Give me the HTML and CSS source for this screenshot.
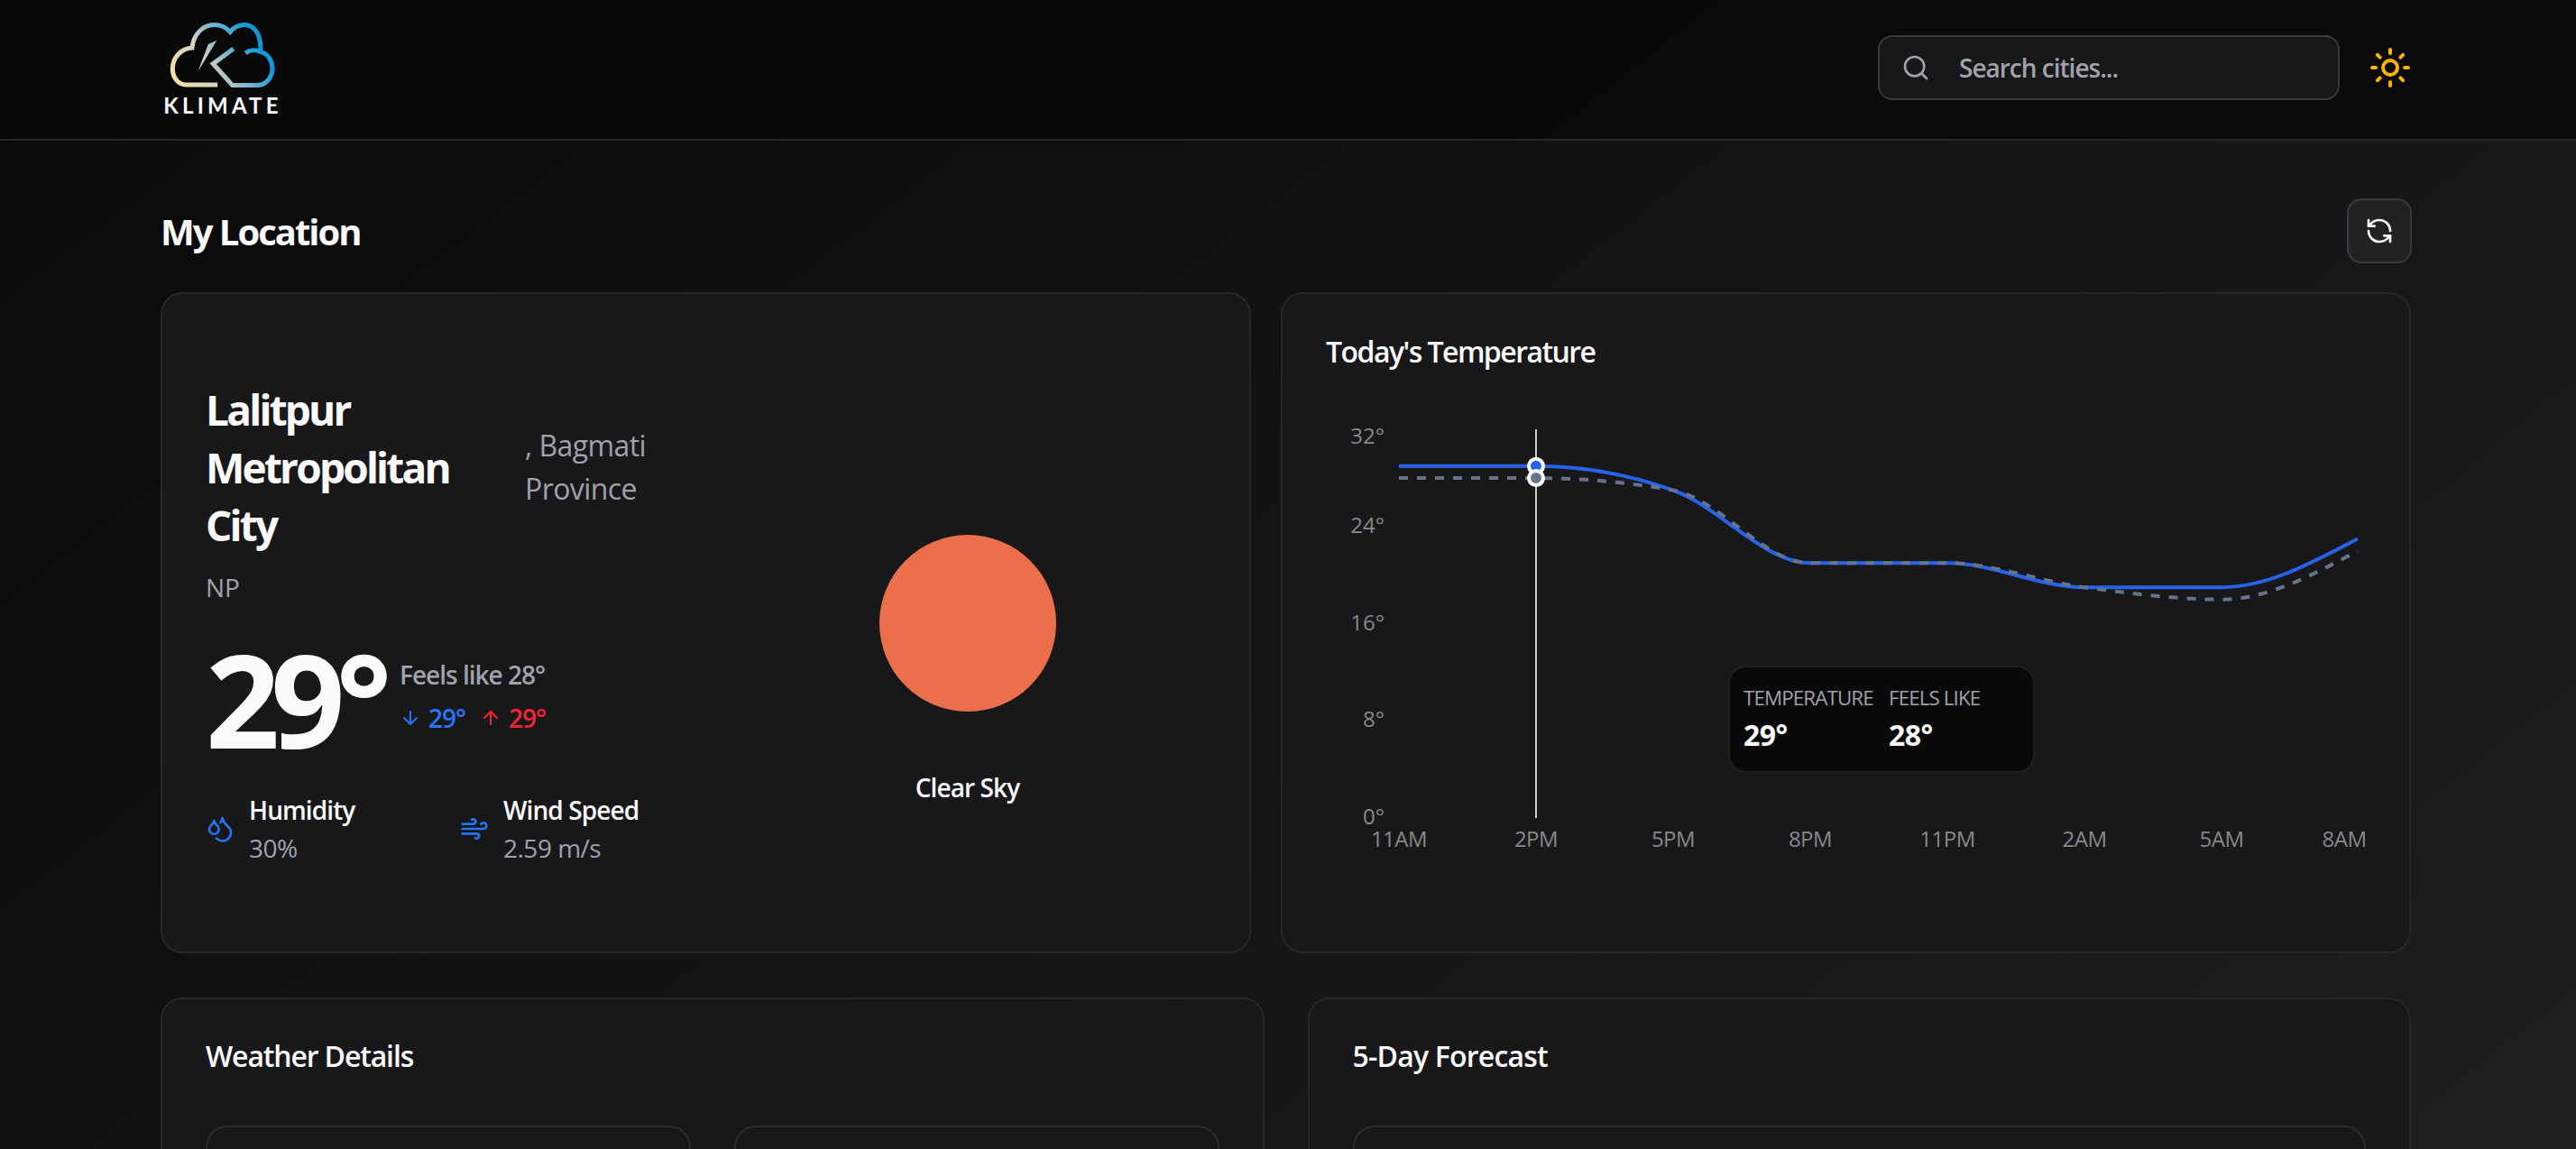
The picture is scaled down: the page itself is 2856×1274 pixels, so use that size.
FILE: index.html
```html
<!DOCTYPE html>
<html lang="en">
<head>
    <meta charset="UTF-8">
    <meta name="viewport" content="width=device-width, initial-scale=1.0">
    <title>Klimate</title>
    <link rel="stylesheet" href="styles.css">
</head>
<body>
    <header class="site-header">
        <div class="logo">
            <svg class="logo-mark" viewBox="55 35 355 225" fill="none">
                <defs>
                    <linearGradient id="cloudGrad" gradientUnits="userSpaceOnUse" x1="70" y1="250" x2="380" y2="60">
                        <stop offset="0" stop-color="#f6e3a1"/>
                        <stop offset="0.35" stop-color="#d5d3bd"/>
                        <stop offset="0.6" stop-color="#6fb2d3"/>
                        <stop offset="0.85" stop-color="#0f98d8"/>
                    </linearGradient>
                </defs>
                <path d="M215 248H110C82 248 65 222 65 195C65 155 95 127 130 125C135 80 165 48 205 48C225 48 245 58 257 72C270 55 285 48 305 48C340 48 362 85 358 138C385 145 398 170 398 195C398 225 375 250 345 250H265L200 178L268 128" stroke="url(#cloudGrad)" stroke-width="15"/>
                <path d="M308 142C325 130 345 131 358 138" stroke="url(#cloudGrad)" stroke-width="15"/>
                <path d="M213 100L150 203L184 113Z" fill="url(#cloudGrad)"/>
            </svg>
            <span class="logo-text">KLIMATE</span>
        </div>
        <div class="header-right">
            <div class="search-box">
                <svg class="icon icon-32" viewBox="0 0 24 24"><circle cx="11" cy="11" r="8"/><path d="m21 21-4.3-4.3"/></svg>
                <span>Search cities...</span>
            </div>
            <svg class="sun-toggle" viewBox="0 0 24 24"><circle cx="12" cy="12" r="4"/><path d="M12 2v2"/><path d="M12 20v2"/><path d="m4.93 4.93 1.41 1.41"/><path d="m17.66 17.66 1.41 1.41"/><path d="M2 12h2"/><path d="M20 12h2"/><path d="m6.34 17.66-1.41 1.41"/><path d="m19.07 4.93-1.41 1.41"/></svg>
        </div>
    </header>

    <main class="container">
        <div class="title-row">
            <h1>My Location</h1>
            <button class="refresh-btn">
                <svg class="icon icon-32" viewBox="0 0 24 24"><path d="M21 12a9 9 0 0 0-9-9 9.75 9.75 0 0 0-6.74 2.74L3 8"/><path d="M3 3v5h5"/><path d="M3 12a9 9 0 0 0 9 9 9.75 9.75 0 0 0 6.74-2.74L21 16"/><path d="M16 16h5v5"/></svg>
            </button>
        </div>

        <div class="top-grid">
            <section class="card current">
                <div class="current-left">
                    <div class="place">
                        <h2>Lalitpur Metropolitan City</h2>
                        <span class="region">, Bagmati Province</span>
                    </div>
                    <p class="country">NP</p>
                    <div class="temp-row">
                        <div class="temp-big">29°</div>
                        <div class="temp-side">
                            <p class="feels">Feels like 28°</p>
                            <div class="minmax">
                                <span class="low">
                                    <svg class="icon icon-24" viewBox="0 0 24 24"><path d="M12 5v14"/><path d="m19 12-7 7-7-7"/></svg>
                                    29°
                                </span>
                                <span class="high">
                                    <svg class="icon icon-24" viewBox="0 0 24 24"><path d="m5 12 7-7 7 7"/><path d="M12 19V5"/></svg>
                                    29°
                                </span>
                            </div>
                        </div>
                    </div>
                    <div class="stats">
                        <div class="stat">
                            <svg class="icon icon-32 blue" viewBox="0 0 24 24"><path d="M7 16.3c2.2 0 4-1.83 4-4.05 0-1.16-.57-2.26-1.71-3.19S7.29 6.75 7 5.3c-.29 1.45-1.14 2.84-2.29 3.76S3 11.1 3 12.25c0 2.22 1.8 4.05 4 4.05z"/><path d="M12.56 6.6A10.97 10.97 0 0 0 14 3.02c.5 2.5 2 4.9 4 6.5s3 3.5 3 5.5a6.98 6.98 0 0 1-11.91 4.97"/></svg>
                            <div>
                                <p class="stat-label">Humidity</p>
                                <p class="stat-value">30%</p>
                            </div>
                        </div>
                        <div class="stat">
                            <svg class="icon icon-32 blue" viewBox="0 0 24 24"><path d="M12.8 19.6A2 2 0 1 0 14 16H2"/><path d="M17.5 8a2.5 2.5 0 1 1 2 4H2"/><path d="M9.8 4.4A2 2 0 1 1 11 8H2"/></svg>
                            <div>
                                <p class="stat-label">Wind Speed</p>
                                <p class="stat-value">2.59 m/s</p>
                            </div>
                        </div>
                    </div>
                </div>
                <div class="current-right">
                    <div class="sun-disc"></div>
                    <p class="condition">Clear Sky</p>
                </div>
            </section>

            <section class="card chart-card">
                <h3 class="card-title title-chart">Today's Temperature</h3>
                <div class="chart-wrap">
                    <svg class="chart" viewBox="1470 460 1154 500">
                        <g class="y-ticks">
                            <text x="1535" y="482">32°</text>
                            <text x="1535" y="581">24°</text>
                            <text x="1535" y="689">16°</text>
                            <text x="1535" y="796">8°</text>
                            <text x="1535" y="904">0°</text>
                        </g>
                        <g class="x-ticks">
                            <text x="1551" y="929">11AM</text>
                            <text x="1703" y="929">2PM</text>
                            <text x="1855" y="929">5PM</text>
                            <text x="2007" y="929">8PM</text>
                            <text x="2159" y="929">11PM</text>
                            <text x="2311" y="929">2AM</text>
                            <text x="2463" y="929">5AM</text>
                            <text x="2599" y="929">8AM</text>
                        </g>
                        <line class="cursor" x1="1703" y1="476" x2="1703" y2="907"/>
                        <path class="line-temp" d="M1551 516.7H1703C1753.7 516.7 1804.3 525.7 1855 543.6C1905.7 561.5 1956.3 624.3 2007 624.3H2159C2209.7 624.3 2260.3 651.2 2311 651.2H2463C2513.7 651.2 2563.3 624.3 2614 597.4"/>
                        <path class="line-feels" d="M1551 530.1H1703C1753.7 530.1 1804.3 534.6 1855 543.6C1905.7 552.6 1956.3 624.3 2007 624.3H2159C2209.7 624.3 2260.3 644.5 2311 651.2C2361.7 657.9 2412.3 664.7 2463 664.7C2513.7 664.7 2563.3 637.8 2614 610.9"/>
                        <circle class="dot-temp" cx="1703" cy="516.7" r="8"/>
                        <circle class="dot-feels" cx="1703" cy="530.1" r="8"/>
                    </svg>
                    <div class="chart-tooltip">
                        <div>
                            <span class="tip-label">Temperature</span>
                            <span class="tip-value">29°</span>
                        </div>
                        <div>
                            <span class="tip-label">Feels Like</span>
                            <span class="tip-value">28°</span>
                        </div>
                    </div>
                </div>
            </section>
        </div>

        <div class="bottom-grid">
            <section class="card details-card">
                <h3 class="card-title title-details">Weather Details</h3>
                <div class="details-grid">
                    <div class="inner-card"></div>
                    <div class="inner-card"></div>
                </div>
            </section>
            <section class="card details-card">
                <h3 class="card-title">5-Day Forecast</h3>
                <div class="inner-card"></div>
            </section>
        </div>
    </main>
</body>
</html>
```

FILE: styles.css
```css
* {
    box-sizing: border-box;
}

html, body {
    margin: 0;
    height: 100vh;
    overflow: hidden;
}

body {
    font-family: "Open Sans", "Noto Sans", sans-serif;
    color: #fafafa;
    background: linear-gradient(to bottom right, #09090b, #242427) no-repeat;
    background-size: 100% 2270px;
}

h1, h2, h3, p {
    margin: 0;
}

.icon {
    fill: none;
    stroke: currentColor;
    stroke-width: 2;
    stroke-linecap: round;
    stroke-linejoin: round;
    flex-shrink: 0;
}

.icon-32 {
    width: 32px;
    height: 32px;
}

.icon-24 {
    width: 24px;
    height: 24px;
}

.blue {
    color: #2475f5;
}

/* header */
.site-header {
    height: 156px;
    padding: 0 183px 0 183px;
    display: flex;
    justify-content: space-between;
    align-items: center;
    background-color: rgba(9, 9, 11, 0.95);
    border-bottom: 2px solid #27272a;
}

.logo {
    display: flex;
    flex-direction: column;
    align-items: center;
    width: 128px;
}

.logo-mark {
    width: 118px;
    height: 75px;
}

.logo-text {
    font-family: "Lato", sans-serif;
    font-size: 24px;
    line-height: 28px;
    font-weight: 700;
    letter-spacing: 4.2px;
    margin-top: 5px;
    white-space: nowrap;
}

.header-right {
    display: flex;
    align-items: center;
    gap: 32px;
    margin-bottom: 4px;
}

.search-box {
    width: 512px;
    height: 72px;
    padding: 0 24px;
    display: flex;
    align-items: center;
    gap: 32px;
    background-color: #18181b;
    border: 2px solid #3a3a3e;
    border-radius: 16px;
    color: #a1a1aa;
    font-size: 28px;
    font-weight: 600;
    letter-spacing: -1px;
}

.sun-toggle {
    width: 48px;
    height: 48px;
    margin-right: -1px;
    fill: none;
    stroke: #f9b208;
    stroke-width: 2;
    stroke-linecap: round;
    stroke-linejoin: round;
}

/* page */
.container {
    padding: 64px 183px 0 178px;
}

.title-row {
    display: flex;
    justify-content: space-between;
    align-items: center;
    margin-bottom: 32px;
}

h1 {
    font-size: 40px;
    font-weight: 700;
    letter-spacing: -2px;
}

.refresh-btn {
    width: 72px;
    height: 72px;
    margin-right: -1px;
    display: flex;
    align-items: center;
    justify-content: center;
    color: #fafafa;
    background-color: #222225;
    border: 2px solid #3a3a3e;
    border-radius: 16px;
    padding: 0;
}

.card {
    background-color: #18181b;
    border: 2px solid #27272a;
    border-radius: 24px;
}

.top-grid {
    display: grid;
    grid-template-columns: 1209px minmax(0, 1fr);
    gap: 33px;
}

.bottom-grid {
    display: grid;
    grid-template-columns: 1fr 1fr;
    gap: 48px;
    margin-top: 49px;
}

/* current weather */
.current {
    height: 733px;
    padding: 0 48px;
    display: flex;
    align-items: center;
}

.current-left {
    width: 532px;
}

.place {
    display: flex;
    align-items: center;
    gap: 16px;
}

.place h2 {
    width: 338px;
    flex-shrink: 0;
    font-size: 46px;
    line-height: 64px;
    font-weight: 700;
    letter-spacing: -2.8px;
}

.region {
    font-size: 32px;
    line-height: 48px;
    color: #a1a1aa;
    letter-spacing: -0.6px;
}

.country {
    font-size: 28px;
    line-height: 40px;
    color: #a1a1aa;
    margin-top: 17px;
}

.temp-row {
    display: flex;
    align-items: center;
    gap: 8px;
    margin-top: 31px;
}

.temp-big {
    font-size: 144px;
    line-height: 144px;
    font-weight: 700;
    letter-spacing: -10px;
    width: 207px;
}

.temp-side {
    padding-top: 2px;
    margin-bottom: 6px;
}

.feels {
    font-size: 28px;
    line-height: 40px;
    font-weight: 600;
    color: #a1a1aa;
    letter-spacing: -1px;
}

.minmax {
    display: flex;
    gap: 16px;
    font-size: 28px;
    line-height: 40px;
    font-weight: 600;
    letter-spacing: -1px;
    margin-top: 8px;
}

.low, .high {
    display: flex;
    align-items: center;
    gap: 8px;
}

.low {
    color: #2475f5;
}

.high {
    color: #f32435;
}

.stats {
    display: grid;
    grid-template-columns: 250px 250px;
    gap: 32px;
    margin-top: 32px;
}

.stat {
    display: flex;
    align-items: center;
    gap: 16px;
}

.stat-label {
    font-size: 28px;
    line-height: 40px;
    font-weight: 600;
    letter-spacing: -0.9px;
}

.stat-value {
    font-size: 28px;
    line-height: 40px;
    color: #a1a1aa;
    letter-spacing: -0.5px;
    margin-top: 2px;
}

.current-right {
    width: 530px;
    margin-left: 48px;
    display: flex;
    flex-direction: column;
    align-items: center;
    padding-top: 104px;
}

.sun-disc {
    width: 196px;
    height: 196px;
    border-radius: 50%;
    background-color: #ec6f4b;
}

.condition {
    font-size: 28px;
    line-height: 40px;
    font-weight: 600;
    letter-spacing: -0.9px;
    margin-top: 64px;
}

/* chart */
.card-title {
    font-size: 32px;
    line-height: 32px;
    font-weight: 600;
    letter-spacing: -0.8px;
}

.title-chart {
    letter-spacing: -1.55px;
}

.title-details {
    letter-spacing: -1.15px;
}

.chart-card {
    height: 733px;
    padding: 48px;
}

.chart-wrap {
    position: relative;
    margin-top: 54px;
}

.chart {
    display: block;
    width: 1154px;
    height: 500px;
}

.chart text {
    font-size: 24px;
    fill: #888888;
    dominant-baseline: central;
}

.y-ticks text {
    text-anchor: end;
}

.x-ticks text {
    text-anchor: middle;
    letter-spacing: -0.5px;
}

.cursor {
    stroke: #cccccc;
    stroke-width: 2;
}

.line-temp, .line-feels {
    fill: none;
    stroke-width: 4;
}

.line-temp {
    stroke: #2563eb;
}

.line-feels {
    stroke: #64748b;
    stroke-dasharray: 10 10;
}

.dot-temp, .dot-feels {
    stroke: #ffffff;
    stroke-width: 4;
}

.dot-temp {
    fill: #2563eb;
}

.dot-feels {
    fill: #64748b;
}

.chart-tooltip {
    position: absolute;
    left: 446px;
    top: 278px;
    width: 340px;
    height: 119px;
    padding: 18px 15px;
    display: grid;
    grid-template-columns: 145px 145px;
    gap: 16px;
    background-color: #09090b;
    border: 2px solid #1f1f22;
    border-radius: 20px;
}

.tip-label {
    display: block;
    font-size: 22.4px;
    line-height: 32px;
    color: #a1a1aa;
    text-transform: uppercase;
    letter-spacing: -0.9px;
    white-space: nowrap;
}

.tip-value {
    display: block;
    font-size: 32px;
    line-height: 40px;
    font-weight: 700;
    letter-spacing: -0.6px;
    margin-top: 5px;
}

/* bottom row, cut off by the window */
.details-card {
    height: 400px;
    padding: 47px 48px 48px;
}

.details-grid {
    display: grid;
    grid-template-columns: 1fr 1fr;
    gap: 48px;
}

.inner-card {
    height: 200px;
    margin-top: 61px;
    border: 2px solid #2c2c2f;
    border-radius: 24px;
}
```
